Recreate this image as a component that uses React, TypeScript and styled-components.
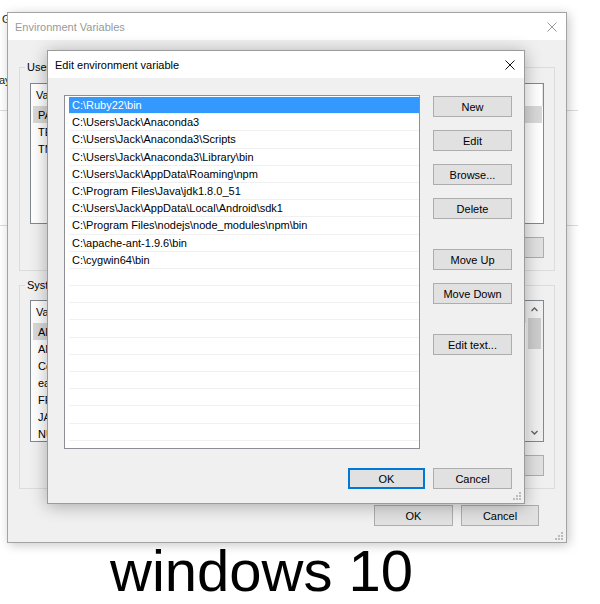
import React from 'react';
import styled, {createGlobalStyle} from 'styled-components';

const GlobalStyle = createGlobalStyle`
  * { box-sizing: border-box; }
  html, body { margin: 0; padding: 0; background: #fff; }
  body {
    font-family: "Liberation Sans", Arial, sans-serif;
    font-size: 11px;
    color: #000;
  }
`;

const Page = styled.div`
  position: relative;
  width: 600px;
  height: 604px;
  overflow: hidden;
  background: #fff;
`;

// the System Properties window peeking out behind everything
const Backdrop = styled.div`
  position: absolute;
  left: 0;
  top: 0;
  width: 578px;
  height: 545px;
`;

const BackdropRule = styled.div<{$top: number}>`
  position: absolute;
  left: 0;
  right: 0;
  top: ${p => p.$top}px;
  height: 1px;
  background: #dcdcdc;
`;

const BackdropLabel = styled.span<{$top: number; $left: number}>`
  position: absolute;
  left: ${p => p.$left}px;
  top: ${p => p.$top}px;
  line-height: 13px;
  color: #1a1a1a;
`;

const Window = styled.div`
  position: relative;
  z-index: 1;
  margin: 12px 0 0 7px;
  width: 560px;
  height: 531px;
  display: flex;
  flex-direction: column;
  border: 1px solid #a3a3a3;
  background: #f0f0f0;
  box-shadow: 2px 2px 10px rgba(0, 0, 0, 0.22);
`;

const TitleBar = styled.div<{$active?: boolean}>`
  flex: none;
  height: 27px;
  display: flex;
  align-items: center;
  justify-content: space-between;
  padding: 0 9px 0 7px;
  background: #fff;
  color: ${p => (p.$active ? '#000' : '#999')};
`;

const CloseIcon = ({color}: {color: string}) => (
  <svg width="10" height="10" viewBox="0 0 10 10">
    <path d="M0.5 0.5 L9.5 9.5 M9.5 0.5 L0.5 9.5" stroke={color} strokeWidth="1" fill="none" />
  </svg>
);

const WindowBody = styled.div`
  position: relative;
  flex: 1;
  display: flex;
  flex-direction: column;
  padding: 27px 11px 12px 11px;
`;

const GroupBox = styled.div<{$gap?: number}>`
  display: flex;
  flex-direction: column;
  margin-top: ${p => p.$gap ?? 0}px;
  padding: 0 10px 12px 10px;
  border: 1px solid #dcdcdc;
`;

const GroupLabel = styled.span`
  align-self: flex-start;
  height: 13px;
  margin: -7px 0 0 -5px;
  padding: 0 2px;
  line-height: 13px;
  white-space: nowrap;
  background: #f0f0f0;
`;

const ListView = styled.div<{$height: number; $gap: number}>`
  display: flex;
  height: ${p => p.$height}px;
  margin-top: ${p => p.$gap}px;
  border: 1px solid #828790;
  background: #fff;
  overflow: hidden;
`;

const ListColumns = styled.div`
  flex: 1;
  min-width: 0;
`;

const HeaderRow = styled.div`
  display: flex;
  height: 22px;
  align-items: center;
`;

const Cell = styled.div<{$width?: number}>`
  width: ${p => (p.$width ? `${p.$width}px` : 'auto')};
  flex: ${p => (p.$width ? 'none' : '1')};
  padding-left: 5px;
  white-space: nowrap;
  overflow: hidden;
`;

const HeaderCell = styled(Cell)`
  border-right: 1px solid #e5e5e5;
  line-height: 22px;
`;

const DataRow = styled.div<{$selected?: boolean}>`
  display: flex;
  height: 17px;
  margin: 0 1px 0 2px;
  align-items: center;
  background: ${p => (p.$selected ? '#d9d9d9' : 'transparent')};
`;

const ScrollBar = styled.div`
  flex: none;
  width: 17px;
  display: flex;
  flex-direction: column;
  background: #f0f0f0;
`;

const ScrollArrow = styled.div`
  height: 17px;
  display: flex;
  align-items: center;
  justify-content: center;
`;

const ScrollTrack = styled.div`
  flex: 1;
  padding: 0 2px;
`;

const ScrollThumb = styled.div`
  height: 31px;
  background: #cdcdcd;
`;

const Chevron = ({down}: {down?: boolean}) => (
  <svg width="7" height="5" viewBox="0 0 7 5">
    <polyline
      points={down ? '0.5,1 3.5,4 6.5,1' : '0.5,4 3.5,1 6.5,4'}
      stroke="#606060"
      strokeWidth="1.3"
      fill="none"
    />
  </svg>
);

const ButtonRow = styled.div<{$gap: number; $right?: number}>`
  display: flex;
  justify-content: flex-end;
  gap: 8px;
  margin-top: ${p => p.$gap}px;
  margin-right: ${p => p.$right ?? 0}px;
`;

const Button = styled.button<{$width?: number; $default?: boolean; $push?: boolean}>`
  flex: none;
  width: ${p => p.$width ?? 75}px;
  height: 21px;
  margin-top: ${p => (p.$push ? 17 : 0)}px;
  padding: 0;
  border: 1px solid ${p => (p.$default ? '#0078d7' : '#adadad')};
  box-shadow: ${p => (p.$default ? 'inset 0 0 0 1px #0078d7' : 'none')};
  background: #e1e1e1;
  font-family: inherit;
  font-size: 11px;
  color: #000;
`;

const Grip = styled.svg<{$right: number; $bottom: number}>`
  position: absolute;
  right: ${p => p.$right}px;
  bottom: ${p => p.$bottom}px;
`;

const GripIcon = ({right, bottom}: {right: number; bottom: number}) => (
  <Grip $right={right} $bottom={bottom} width="8" height="8" viewBox="0 0 8 8">
    {[
      [6, 0],
      [3, 3],
      [6, 3],
      [0, 6],
      [3, 6],
      [6, 6],
    ].map(([x, y]) => (
      <rect key={`${x}-${y}`} x={x} y={y} width="2" height="2" fill="#bcbcbc" />
    ))}
  </Grip>
);

const Dialog = styled.div`
  position: absolute;
  z-index: 2;
  left: 47px;
  top: 50px;
  width: 478px;
  height: 454px;
  display: flex;
  flex-direction: column;
  border: 1px solid #9b9b9b;
  background: #f0f0f0;
  box-shadow: 0 2px 16px rgba(0, 0, 0, 0.3);
`;

const DialogBody = styled.div`
  position: relative;
  flex: 1;
  display: flex;
  flex-direction: column;
  padding: 17px 12px 14px 16px;
`;

const DialogMain = styled.div`
  display: flex;
  gap: 13px;
`;

const PathList = styled.div`
  width: 356px;
  height: 354px;
  padding: 1px 0 0 4px;
  border: 1px solid #8e8f94;
  background: #fff;
  overflow: hidden;
`;

const PathRow = styled.div<{$selected?: boolean}>`
  height: 17.2px;
  line-height: 17px;
  padding-left: 3px;
  white-space: nowrap;
  background: ${p => (p.$selected ? '#3399ff' : 'transparent')};
  color: ${p => (p.$selected ? '#fff' : '#000')};
  box-shadow: inset 0 -1px 0 #f0f0f0;
`;

const ButtonColumn = styled.div`
  display: flex;
  flex-direction: column;
  gap: 13px;
  padding-top: 1px;
`;

const DialogFooter = styled.div`
  display: flex;
  justify-content: flex-end;
  gap: 8px;
  margin-top: 19px;
`;

const Caption = styled.div`
  margin-top: -1px;
  padding-left: 110px;
  font-family: "Liberation Sans", Arial, sans-serif;
  font-size: 58px;
  line-height: 58px;
  color: #000;
`;

const paths = [
  'C:\\Ruby22\\bin',
  'C:\\Users\\Jack\\Anaconda3',
  'C:\\Users\\Jack\\Anaconda3\\Scripts',
  'C:\\Users\\Jack\\Anaconda3\\Library\\bin',
  'C:\\Users\\Jack\\AppData\\Roaming\\npm',
  'C:\\Program Files\\Java\\jdk1.8.0_51',
  'C:\\Users\\Jack\\AppData\\Local\\Android\\sdk1',
  'C:\\Program Files\\nodejs\\node_modules\\npm\\bin',
  'C:\\apache-ant-1.9.6\\bin',
  'C:\\cygwin64\\bin',
];

const userVars = [
  ['PATH', 'C:\\Ruby22\\bin;C:\\Users\\Jack\\Anaconda3;...'],
  ['TEMP', '%USERPROFILE%\\AppData\\Local\\Temp'],
  ['TMP', '%USERPROFILE%\\AppData\\Local\\Temp'],
];

const systemVars = [
  ['ANDROID_HOME', 'C:\\Users\\Jack\\AppData\\Local\\Android\\sdk1'],
  ['ANT_HOME', 'C:\\apache-ant-1.9.6'],
  ['ComSpec', 'C:\\Windows\\system32\\cmd.exe'],
  ['easyplussdk', 'C:\\Program Files (x86)\\Common Files\\lenovo\\easyplussdk\\bin'],
  ['FP_NO_HOST_CHECK', 'NO'],
  ['JAVA_HOME', 'C:\\Program Files\\Java\\jdk1.8.0_51'],
  ['NUMBER_OF_PROCESSORS', '4'],
  ['OS', 'Windows_NT'],
];

const App = () => {
  return (
    <Page>
      <GlobalStyle />
      <Backdrop>
        <BackdropLabel $top={13} $left={2}>G</BackdropLabel>
        <BackdropLabel $top={74} $left={-1}>ay</BackdropLabel>
        <BackdropRule $top={110} />
        <BackdropRule $top={225} />
      </Backdrop>

      <Window>
        <TitleBar>
          <span>Environment Variables</span>
          <CloseIcon color="#9a9a9a" />
        </TitleBar>
        <WindowBody>
          <GroupBox>
            <GroupLabel>User variables for Jack</GroupLabel>
            <ListView $height={141} $gap={9}>
              <ListColumns>
                <HeaderRow>
                  <HeaderCell $width={120}>Variable</HeaderCell>
                  <HeaderCell>Value</HeaderCell>
                </HeaderRow>
                {userVars.map(([name, value], i) => (
                  <DataRow key={name} $selected={i === 0}>
                    <Cell $width={120}>{name}</Cell>
                    <Cell>{value}</Cell>
                  </DataRow>
                ))}
              </ListColumns>
            </ListView>
            <ButtonRow $gap={13}>
              <Button>New...</Button>
              <Button>Edit...</Button>
              <Button>Delete</Button>
            </ButtonRow>
          </GroupBox>

          <GroupBox $gap={14}>
            <GroupLabel>System variables</GroupLabel>
            <ListView $height={142} $gap={8}>
              <ListColumns>
                <HeaderRow>
                  <HeaderCell $width={120}>Variable</HeaderCell>
                  <HeaderCell>Value</HeaderCell>
                </HeaderRow>
                {systemVars.map(([name, value], i) => (
                  <DataRow key={name} $selected={i === 0}>
                    <Cell $width={120}>{name}</Cell>
                    <Cell>{value}</Cell>
                  </DataRow>
                ))}
              </ListColumns>
              <ScrollBar>
                <ScrollArrow>
                  <Chevron />
                </ScrollArrow>
                <ScrollTrack>
                  <ScrollThumb />
                </ScrollTrack>
                <ScrollArrow>
                  <Chevron down />
                </ScrollArrow>
              </ScrollBar>
            </ListView>
            <ButtonRow $gap={13}>
              <Button>New...</Button>
              <Button>Edit...</Button>
              <Button>Delete</Button>
            </ButtonRow>
          </GroupBox>

          <ButtonRow $gap={16} $right={16}>
            <Button $width={79}>OK</Button>
            <Button $width={78}>Cancel</Button>
          </ButtonRow>
          <GripIcon right={3} bottom={2} />
        </WindowBody>
      </Window>

      <Dialog>
        <TitleBar $active>
          <span>Edit environment variable</span>
          <CloseIcon color="#111" />
        </TitleBar>
        <DialogBody>
          <DialogMain>
            <PathList>
              {paths.map((p, i) => (
                <PathRow key={p} $selected={i === 0}>
                  {p}
                </PathRow>
              ))}
              {Array.from({length: 11}).map((_, i) => (
                <PathRow key={`empty-${i}`} />
              ))}
            </PathList>
            <ButtonColumn>
              <Button $width={79}>New</Button>
              <Button $width={79}>Edit</Button>
              <Button $width={79}>Browse...</Button>
              <Button $width={79}>Delete</Button>
              <Button $width={79} $push>
                Move Up
              </Button>
              <Button $width={79}>Move Down</Button>
              <Button $width={79} $push>
                Edit text...
              </Button>
            </ButtonColumn>
          </DialogMain>
          <DialogFooter>
            <Button $width={77} $default>
              OK
            </Button>
            <Button $width={79}>Cancel</Button>
          </DialogFooter>
          <GripIcon right={3} bottom={3} />
        </DialogBody>
      </Dialog>

      <Caption>windows 10</Caption>
    </Page>
  );
};

export default App;
